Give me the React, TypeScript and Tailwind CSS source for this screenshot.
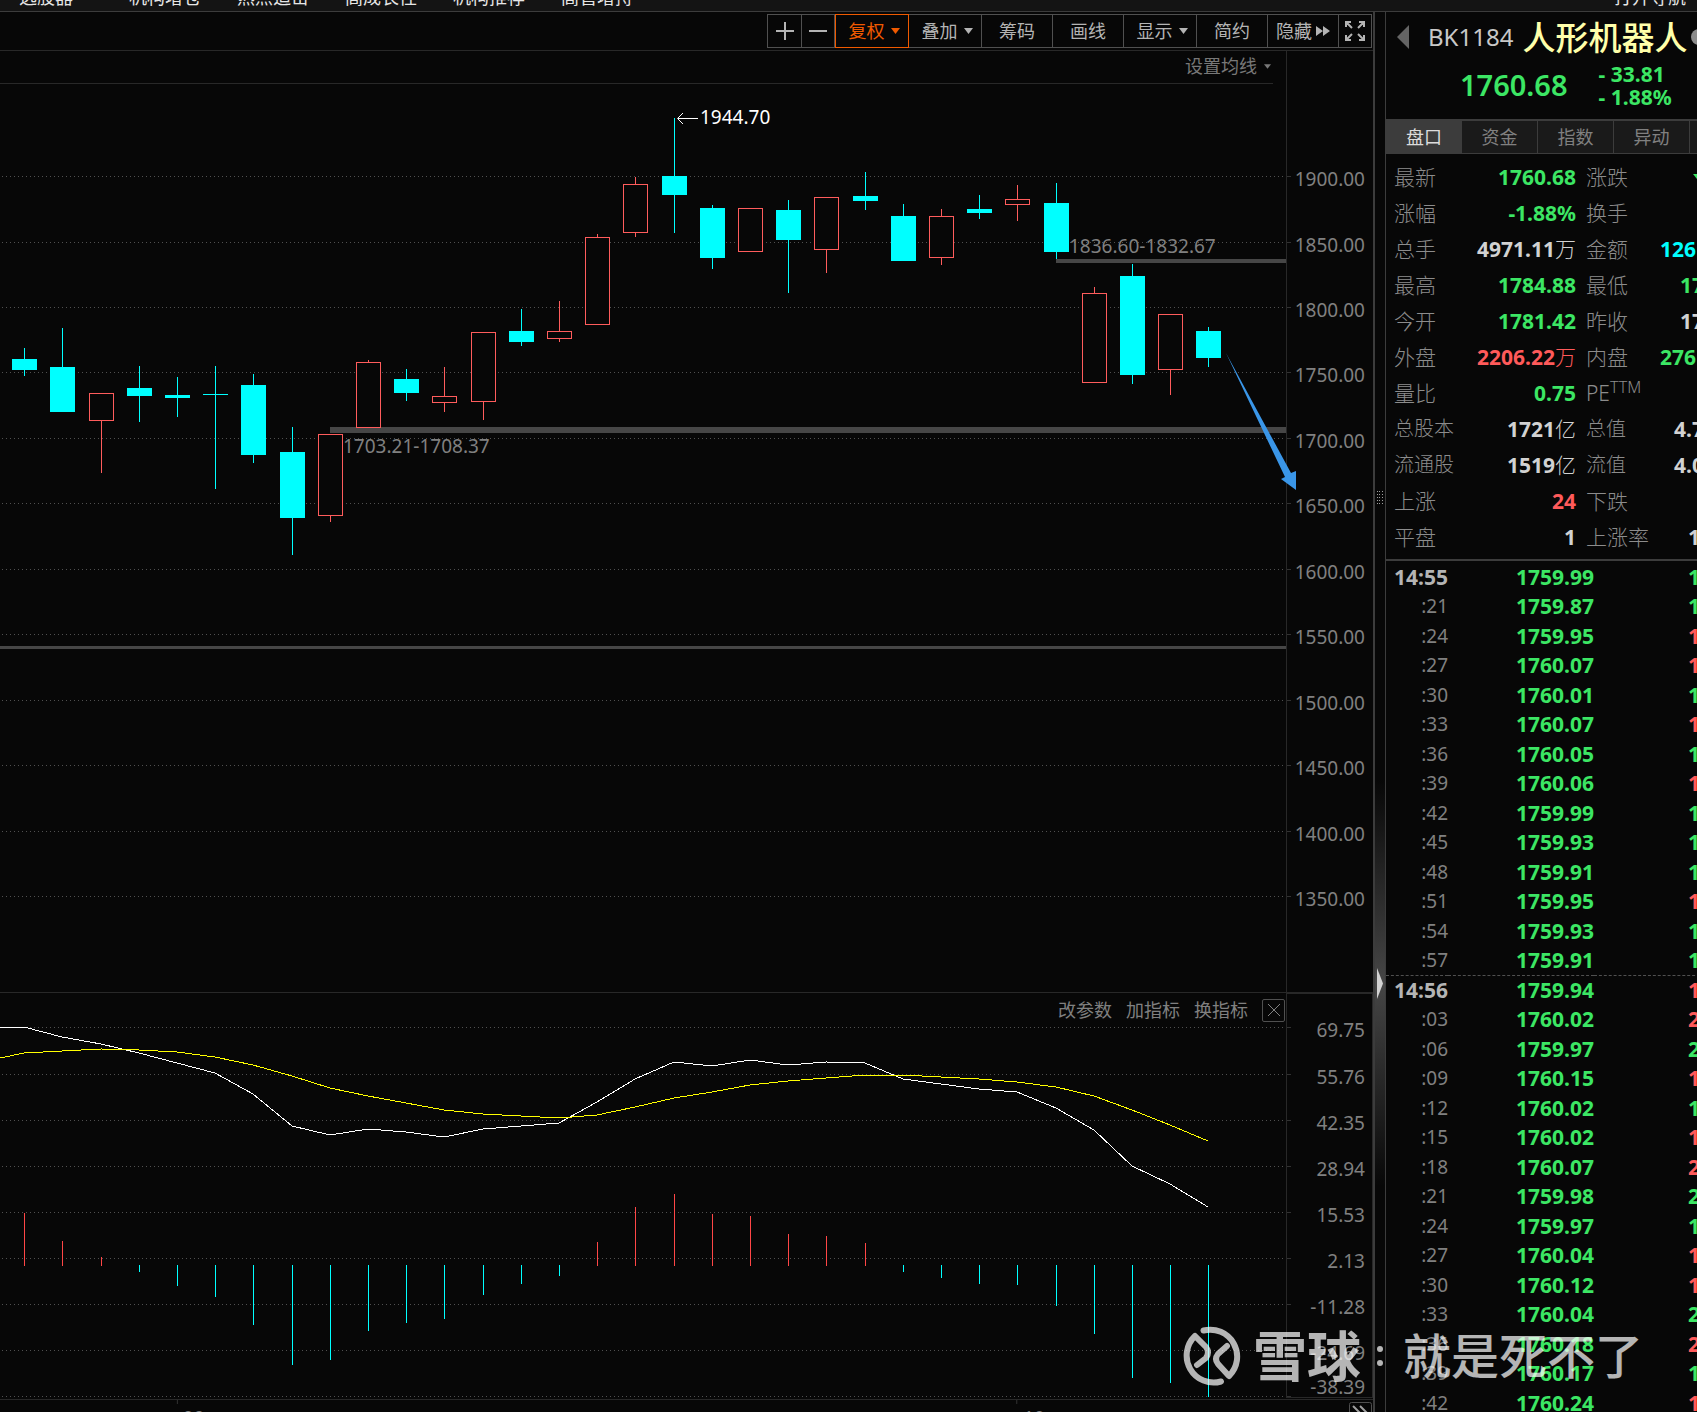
import React from "react";

type Candle = [x: number, up: boolean, top: number, bottom: number, high: number, low: number];

const candles: Candle[] = [
  [24, false, 359, 370, 348, 376],
  [62, false, 367, 412, 328, 412],
  [101, true, 393, 421, 393, 473],
  [139, false, 388, 396, 366, 422],
  [177, false, 395, 398, 377, 417],
  [215, false, 394, 395, 366, 489],
  [253, false, 385, 455, 374, 463],
  [292, false, 452, 518, 427, 555],
  [330, true, 434, 516, 434, 522],
  [368, true, 362, 428, 360, 428],
  [406, false, 379, 393, 369, 401],
  [444, true, 396, 403, 367, 412],
  [483, true, 332, 402, 332, 420],
  [521, false, 331, 342, 309, 346],
  [559, true, 331, 339, 301, 342],
  [597, true, 237, 325, 234, 325],
  [635, true, 184, 233, 177, 237],
  [674, false, 176, 195, 118, 233],
  [712, false, 208, 258, 205, 269],
  [750, true, 208, 252, 208, 252],
  [788, false, 210, 240, 200, 293],
  [826, true, 197, 250, 197, 273],
  [865, false, 196, 201, 172, 210],
  [903, false, 216, 261, 204, 261],
  [941, true, 216, 258, 209, 265],
  [979, false, 209, 213, 195, 219],
  [1017, true, 199, 205, 185, 221],
  [1056, false, 203, 252, 183, 259],
  [1094, true, 293, 383, 287, 383],
  [1132, false, 276, 375, 264, 384],
  [1170, true, 314, 370, 314, 395],
  [1208, false, 331, 358, 327, 367],
];

const priceTicks: [number, string][] = [
  [176, "1900.00"],
  [242, "1850.00"],
  [307, "1800.00"],
  [372, "1750.00"],
  [438, "1700.00"],
  [503, "1650.00"],
  [569, "1600.00"],
  [634, "1550.00"],
  [700, "1500.00"],
  [765, "1450.00"],
  [831, "1400.00"],
  [896, "1350.00"],
];

const macdTicks: [number, string][] = [
  [1027, "69.75"],
  [1074, "55.76"],
  [1120, "42.35"],
  [1166, "28.94"],
  [1212, "15.53"],
  [1258, "2.13"],
  [1304, "-11.28"],
  [1350, "-24.69"],
  [1396, "-38.39"],
];

const dif = [
  1027, 1037, 1044, 1053, 1063, 1073, 1094, 1126, 1135, 1129, 1132, 1137, 1129, 1126, 1123, 1102,
  1079, 1062, 1066, 1060, 1065, 1062, 1063, 1079, 1084, 1089, 1092, 1108, 1130, 1166, 1184, 1207,
];

const dea = [
  1053, 1051, 1049, 1050, 1052, 1057, 1065, 1076, 1088, 1096, 1103, 1110, 1114, 1116, 1118, 1115,
  1107, 1098, 1092, 1085, 1081, 1078, 1075, 1075, 1077, 1079, 1082, 1087, 1096, 1110, 1125, 1141,
];

// bars above the zero line end at a smaller y than ZERO
const ZERO = 1265;
const bars = [
  1213, 1241, 1257, 1272, 1286, 1297, 1325, 1365, 1360, 1331, 1323, 1319, 1295, 1284, 1276, 1242,
  1207, 1194, 1214, 1216, 1234, 1236, 1243, 1272, 1278, 1284, 1285, 1306, 1334, 1378, 1383, 1397,
];

const GREEN = "text-[#3ce664]";
const RED = "text-[#ff5a5a]";
const WHITE = "text-[#d2d2d2]";
const CYAN = "text-[#00ffff]";

type Quote = {
  label: string;
  value: string;
  unit?: string;
  tone: string;
  label2: string;
  value2?: string;
  tone2?: string;
  small?: boolean;
};

const quotes: Quote[] = [
  { label: "最新", value: "1760.68", tone: GREEN, label2: "涨跌" },
  { label: "涨幅", value: "-1.88%", tone: GREEN, label2: "换手" },
  { label: "总手", value: "4971.11", unit: "万", tone: WHITE, label2: "金额", value2: "126", tone2: CYAN },
  { label: "最高", value: "1784.88", tone: GREEN, label2: "最低", value2: "17", tone2: GREEN },
  { label: "今开", value: "1781.42", tone: GREEN, label2: "昨收", value2: "17", tone2: WHITE },
  { label: "外盘", value: "2206.22", unit: "万", tone: RED, label2: "内盘", value2: "276", tone2: GREEN },
  { label: "量比", value: "0.75", tone: GREEN, label2: "PE" },
  { label: "总股本", value: "1721", unit: "亿", tone: WHITE, label2: "总值", value2: "4.7", tone2: WHITE, small: true },
  { label: "流通股", value: "1519", unit: "亿", tone: WHITE, label2: "流值", value2: "4.0", tone2: WHITE, small: true },
  { label: "上涨", value: "24", tone: RED, label2: "下跌" },
  { label: "平盘", value: "1", tone: WHITE, label2: "上涨率", value2: "1", tone2: WHITE },
];

const ticks: [string, string, string, string][] = [
  ["14:55", "1759.99", "1", GREEN],
  [":21", "1759.87", "1", GREEN],
  [":24", "1759.95", "1", RED],
  [":27", "1760.07", "1", RED],
  [":30", "1760.01", "1", GREEN],
  [":33", "1760.07", "1", RED],
  [":36", "1760.05", "1", GREEN],
  [":39", "1760.06", "1", RED],
  [":42", "1759.99", "1", GREEN],
  [":45", "1759.93", "1", GREEN],
  [":48", "1759.91", "1", GREEN],
  [":51", "1759.95", "1", RED],
  [":54", "1759.93", "1", GREEN],
  [":57", "1759.91", "1", GREEN],
  ["14:56", "1759.94", "1", RED],
  [":03", "1760.02", "2", RED],
  [":06", "1759.97", "2", GREEN],
  [":09", "1760.15", "1", RED],
  [":12", "1760.02", "1", GREEN],
  [":15", "1760.02", "1", RED],
  [":18", "1760.07", "2", RED],
  [":21", "1759.98", "2", GREEN],
  [":24", "1759.97", "1", GREEN],
  [":27", "1760.04", "1", RED],
  [":30", "1760.12", "1", RED],
  [":33", "1760.04", "2", GREEN],
  [":36", "1760.18", "2", RED],
  [":39", "1760.17", "1", GREEN],
  [":42", "1760.24", "1", RED],
];

function Caret({ small }: { small?: boolean }) {
  return (
    <svg width={small ? 7 : 9} height={small ? 5 : 6} viewBox="0 0 9 6" fill="currentColor">
      <path d="M0 0h9L4.5 6z" />
    </svg>
  );
}

function TopMenu() {
  const item = "shrink-0 whitespace-nowrap";
  return (
    <nav className="flex h-3 shrink-0 items-end overflow-hidden border-b border-[#3c3c3c] bg-[#141414] pr-[11px] pb-[5px] pl-[19px] text-lg leading-[18px] text-[#e6e6e6]">
      <a href="#" className={`${item} mr-14`}>选股器</a>
      <div className="flex flex-1 gap-9">
        <a href="#" className={item}>机构增仓</a>
        <a href="#" className={item}>热点追击</a>
        <a href="#" className={item}>高成长性</a>
        <a href="#" className={item}>机构推荐</a>
        <a href="#" className={item}>高管增持</a>
      </div>
      <a href="#" className={item}>打开导航</a>
    </nav>
  );
}

function Toolbar() {
  const btn = "flex h-full items-center justify-center gap-1.5 border-r border-[#505050] whitespace-nowrap";
  return (
    <div className="flex h-[39px] shrink-0 justify-end border-b border-[#282828] pt-[2px] pr-px pb-[2px]">
      <div className="flex h-[34px] border border-r-0 border-[#505050] text-lg leading-none text-[#b4b4b4]">
        <button aria-label="放大" className={`${btn} w-[34px]`}>
          <svg width="18" height="18" viewBox="0 0 18 18" stroke="currentColor" strokeWidth="2">
            <path d="M9 0v18M0 9h18" />
          </svg>
        </button>
        <button aria-label="缩小" className={`${btn} w-[33px]`}>
          <svg width="18" height="18" viewBox="0 0 18 18" stroke="currentColor" strokeWidth="2">
            <path d="M0 9h18" />
          </svg>
        </button>
        <button className="-my-px flex w-[74px] items-center justify-center gap-1.5 border border-[#f05a00] pl-1 text-[#f05a00]">
          复权 <Caret />
        </button>
        <button className={`${btn} w-[73px] pl-1`}>
          叠加 <Caret />
        </button>
        <button className={`${btn} w-[71px]`}>筹码</button>
        <button className={`${btn} w-[71px]`}>画线</button>
        <button className={`${btn} w-[73px] pl-1`}>
          显示 <Caret />
        </button>
        <button className={`${btn} w-[71px]`}>简约</button>
        <button className="flex w-[71px] items-center justify-center gap-1 border-r border-[#505050] whitespace-nowrap">
          隐藏
          <svg width="14" height="10" viewBox="0 0 14 10" fill="currentColor">
            <path d="M0 0l7 5-7 5zM7 0l7 5-7 5z" />
          </svg>
        </button>
        <button aria-label="全屏" className={`${btn} w-[33px]`}>
          <svg width="22" height="22" viewBox="0 0 22 22" fill="none" stroke="currentColor" strokeWidth="2">
            <path d="M2 7V2h5M2 2l6 6M15 2h5v5M20 2l-6 6M2 15v5h5M2 20l6-6M20 15v5h-5M20 20l-6-6" />
          </svg>
        </button>
      </div>
    </div>
  );
}

function GridLine({ y }: { y: number }) {
  return <line x1="2" x2="1286" y1={y + 0.5} y2={y + 0.5} stroke="#505050" strokeDasharray="1 3" />;
}

function CandleShape({ candle }: { candle: Candle }) {
  const [x, up, top, bottom, high, low] = candle;
  if (up) {
    return (
      <g fill="#ff5c5c">
        <rect x={x} y={high} width="1" height={low - high} />
        <rect x={x - 12 + 0.5} y={top + 0.5} width="24" height={bottom - top - 1} fill="#070707" stroke="#ff5c5c" />
      </g>
    );
  }
  return (
    <g fill="#00ffff">
      <rect x={x} y={high} width="1" height={low - high} />
      <rect x={x - 12} y={top} width="25" height={bottom - top} />
    </g>
  );
}

function Axis({ rows, top, width, height }: { rows: [number, string][]; top: number; width: number; height: number }) {
  return (
    <svg className="h-full w-full" viewBox={`0 ${top} ${width} ${height}`} preserveAspectRatio="xMinYMin">
      {rows.map(([y, label]) => (
        <g key={label}>
          <rect x="0" y={y} width="4" height="1" fill="#323232" />
          <text x="78" y={label === "-38.39" ? 1394 : y + 10} textAnchor="end" fontSize="19" fill="#808080">
            {label}
          </text>
        </g>
      ))}
    </svg>
  );
}

function PriceChart() {
  return (
    <section className="flex h-[942px] shrink-0 border-b border-[#282828]">
      <div className="flex min-w-0 flex-1 flex-col">
        <div className="mr-[13px] flex h-[33px] shrink-0 items-center justify-end border-b border-[#282828] pr-[2px] pb-[2px]">
          <button className="flex items-center gap-[7px] text-lg leading-none text-[#787878]">
            设置均线 <Caret small />
          </button>
        </div>
        <svg className="min-h-0 w-full flex-1" viewBox="0 84 1286 908" preserveAspectRatio="xMinYMin">
          <g shapeRendering="crispEdges">
            {priceTicks.map(([y]) => (
              <GridLine key={y} y={y} />
            ))}
            <rect x="330" y="427" width="956" height="6" fill="#464646" />
            <rect x="1056" y="259" width="230" height="4" fill="#464646" />
            <rect x="0" y="646" width="1286" height="3" fill="#464646" />
            {candles.map((c) => (
              <CandleShape key={c[0]} candle={c} />
            ))}
          </g>
          <path d="M698 118.500h-20M683 113l-5.500 5.500 5.500 5.500" fill="none" stroke="#fff" />
          <g fontSize="19" fill="#808080">
            <text x="700" y="124" fill="#fff">1944.70</text>
            <text x="1069" y="253">1836.60-1832.67</text>
            <text x="343" y="453">1703.21-1708.37</text>
          </g>
        </svg>
      </div>
      <div className="w-[87px] shrink-0 border-l border-[#282828]">
        <Axis rows={priceTicks} top={51} width={86} height={941} />
      </div>
    </section>
  );
}

function Macd() {
  const points = (ys: number[]) => ys.map((y, i) => `${candles[i][0]},${y}`).join(" ");
  return (
    <section className="flex h-[407px] shrink-0 border-b border-[#282828]">
      <div className="flex min-w-0 flex-1 flex-col">
        <div className="flex h-[30px] shrink-0 items-center justify-end gap-[14px] pt-1 pr-px text-lg leading-none text-[#808080]">
          <button>改参数</button>
          <button>加指标</button>
          <button>换指标</button>
          <button aria-label="关闭" className="flex size-[23px] items-center justify-center rounded-[2px] border border-[#505050]">
            <svg width="12" height="12" viewBox="0 0 12 12" stroke="currentColor">
              <path d="M0 0l12 12M12 0L0 12" />
            </svg>
          </button>
        </div>
        <svg className="min-h-0 w-full flex-1" viewBox="0 1023 1286 376" preserveAspectRatio="xMinYMin">
          <g shapeRendering="crispEdges">
            {macdTicks.map(([y]) => (
              <GridLine key={y} y={y} />
            ))}
            {bars.map((y, i) =>
              y < ZERO ? (
                <rect key={i} x={candles[i][0]} y={y} width="1" height={ZERO + 1 - y} fill="#ff4646" />
              ) : (
                <rect key={i} x={candles[i][0]} y={ZERO} width="1" height={y - ZERO} fill="#00ffff" />
              )
            )}
            <polyline points={`0,1027 ${points(dif)}`} fill="none" stroke="#fff" />
            <polyline points={`0,1058 ${points(dea)}`} fill="none" stroke="#ff0" />
          </g>
        </svg>
      </div>
      <div className="mb-px w-[87px] shrink-0 border border-[#282828]">
        <Axis rows={macdTicks} top={994} width={85} height={403} />
      </div>
    </section>
  );
}

function DateAxis() {
  return (
    <div className="min-h-0 flex-1 overflow-hidden">
      <svg className="h-full w-full" viewBox="0 1400 1374 12" preserveAspectRatio="xMinYMin">
        <rect x="177" y="1400" width="1" height="4" fill="#323232" />
        <rect x="1017" y="1400" width="1" height="4" fill="#323232" />
        <text x="183" y="1424" fontSize="19" fill="#808080">09</text>
        <text x="1024" y="1424" fontSize="19" fill="#808080">10</text>
        <rect x="1350.500" y="1402.500" width="22" height="22" rx="2" fill="none" stroke="#505050" />
        <path d="M1354 1406l8 8M1361 1406l8 8" fill="none" stroke="#a0a0a0" strokeWidth="2" />
      </svg>
    </div>
  );
}

function Splitter() {
  return (
    <div className="flex w-[13px] shrink-0 flex-col items-center border-x border-l-2 border-[#3c3c3c]">
      <div className="h-[479px] shrink-0" />
      <svg className="shrink-0" width="6" height="13" viewBox="0 0 6 13" fill="#a0a0a0" shapeRendering="crispEdges">
        {[0, 3, 6, 9, 12].map((y) => (
          <path key={y} d={`M0 ${y}h1v1h-1zM2 ${y}h1v1h-1zM5 ${y}h1v1h-1z`} />
        ))}
      </svg>
      <div className="h-[276px] shrink-0" />
      <div className="flex h-[406px] w-full shrink-0 items-center justify-center bg-linear-to-b from-transparent via-[#464646] to-transparent">
        <svg width="6" height="31" viewBox="0 0 6 31" fill="#d2d2d2">
          <path d="M0 0Q2 5 6 15.500Q2 26 0 31z" />
        </svg>
      </div>
    </div>
  );
}

function QuoteHeader() {
  return (
    <header className="flex h-[109px] shrink-0 flex-col border-b-2 border-[#3c3c3c]">
      <div className="flex h-[50px] items-center whitespace-nowrap">
        <button aria-label="上一个" className="ml-[11px] shrink-0 text-[#646464]">
          <svg width="12" height="24" viewBox="0 0 12 24" fill="currentColor">
            <path d="M12 0v24L0 12z" />
          </svg>
        </button>
        <span className="ml-[19px] text-2xl text-[#c8c8c8]">BK1184</span>
        <h1 className="ml-[9px] text-[33px] leading-none font-medium text-[#ffffaa]">人形机器人</h1>
        <span className="ml-1 size-4 shrink-0 rounded-full bg-[#8c8c8c]" />
      </div>
      <div className="flex h-12 items-center pl-[74px] text-[#3ce664]">
        <span className="pb-1 text-[29px] leading-none font-semibold">1760.68</span>
        <span className="ml-[31px] text-[21px] leading-[23px] font-bold whitespace-pre">
          - 33.81
          <br />- 1.88%
        </span>
      </div>
    </header>
  );
}

function Tabs() {
  const tab = "h-full w-[76px] shrink-0 border-r border-[#3c3c3c] bg-[#1a1a1a] text-[#808080]";
  return (
    <div className="flex h-[33px] shrink-0 overflow-hidden border-b border-[#3c3c3c] bg-[#1a1a1a] text-lg leading-none">
      <button className="h-full w-[76px] shrink-0 bg-[#3c3c3c] text-[#dcdcdc]">盘口</button>
      <button className={tab}>资金</button>
      <button className={tab}>指数</button>
      <button className={tab}>异动</button>
    </div>
  );
}

function second(q: Quote) {
  if (q.label2 === "涨跌") {
    return (
      <svg className="ml-auto" width="11" height="7" viewBox="0 0 11 7" fill="currentColor">
        <path d="M0 0h11L5.500 7z" />
      </svg>
    );
  }
  return q.value2;
}

function QuoteTable() {
  return (
    <div className="shrink-0 overflow-hidden border-b-2 border-[#3c3c3c] pt-[5px] pb-1">
      <table className="w-[318px] table-fixed border-collapse text-[21px] leading-none whitespace-nowrap">
        <tbody>
          {quotes.map((q) => (
            <tr key={q.label} className="h-9">
              <th className={`w-[70px] p-0 pl-2 text-left font-light text-[#8c8c8c] ${q.small ? "text-xl leading-none" : ""}`}>
                {q.label}
              </th>
              <td className={`w-[120px] p-0 text-right font-bold ${q.tone}`}>
                {q.value}
                {q.unit && <span className="font-light">{q.unit}</span>}
              </td>
              <th className={`w-[74px] p-0 pl-[10px] text-left font-light text-[#8c8c8c] ${q.small ? "text-xl leading-none" : ""}`}>
                {q.label2}
                {q.label2 === "PE" && <sup className="text-base leading-none">TTM</sup>}
              </th>
              <td
                className={`p-0 text-right font-bold ${q.tone2 ?? GREEN} ${q.value2?.length === 3 && !q.small ? "pr-2" : ""} ${q.value2 === "1" ? "pr-1" : ""}`}
              >
                {second(q)}
              </td>
            </tr>
          ))}
        </tbody>
      </table>
    </div>
  );
}

function TickTable() {
  return (
    <div className="min-h-0 flex-1 overflow-hidden pt-px">
      <table className="w-[314px] table-fixed border-collapse text-[21px] leading-none">
        <tbody>
          {ticks.map(([time, price, volume, tone], i) => {
            const minute = !time.startsWith(":");
            return (
              <tr
                key={i}
                className={`odd:h-[30px] even:h-[29px] ${minute && i > 0 ? "border-t border-dashed border-[#505050]" : ""}`}
              >
                <td className={`w-[62px] p-0 text-right ${minute ? "font-bold text-[#b4b4b4]" : "text-[19px] text-[#808080]"}`}>
                  {time}
                </td>
                <td className="w-[146px] p-0 text-right font-bold text-[#3ce664]">{price}</td>
                <td className={`p-0 text-right font-bold ${tone}`}>{volume}</td>
              </tr>
            );
          })}
        </tbody>
      </table>
    </div>
  );
}

function TrendArrow() {
  return (
    <svg className="pointer-events-none absolute top-[353px] left-[1226px]" width="71" height="138" viewBox="0 0 71 138" fill="#3a96e8">
      <path d="M0 0L59 124l-4 2 15 11V118l-5 2z" />
    </svg>
  );
}

function Watermark() {
  return (
    <div className="pointer-events-none absolute right-[54px] bottom-[26px] flex items-center whitespace-nowrap text-white opacity-70">
      <svg width="60" height="60" viewBox="0 0 60 60" fill="none" stroke="currentColor" strokeWidth="6" strokeLinecap="round" strokeLinejoin="round">
        <path d="M21.500 4.500A27 27 0 0 1 47 50L36 38Q32 33 36 28L45 20" />
        <path d="M39 55.500A27 27 0 0 1 13 10L24 21Q28 26 24 32L15 39" />
      </svg>
      <span className="ml-[11px] text-[54px] leading-none font-bold">雪球</span>
      <svg className="ml-4" width="6" height="20" viewBox="0 0 6 20" fill="currentColor">
        <circle cx="3" cy="3" r="3" />
        <circle cx="3" cy="17" r="3" />
      </svg>
      <span className="ml-5 text-5xl leading-none font-medium">就是死不了</span>
    </div>
  );
}

export default function App() {
  return (
    <div className="relative flex h-screen flex-col overflow-hidden bg-[#070707] font-['Noto_Sans','Noto_Sans_CJK_SC',sans-serif]">
      <TopMenu />
      <main className="flex min-h-0 flex-1">
        <div className="flex min-w-0 flex-1 flex-col">
          <Toolbar />
          <PriceChart />
          <Macd />
          <DateAxis />
        </div>
        <Splitter />
        <aside className="flex w-[311px] shrink-0 flex-col overflow-hidden">
          <QuoteHeader />
          <Tabs />
          <QuoteTable />
          <TickTable />
        </aside>
      </main>
      <TrendArrow />
      <Watermark />
    </div>
  );
}
